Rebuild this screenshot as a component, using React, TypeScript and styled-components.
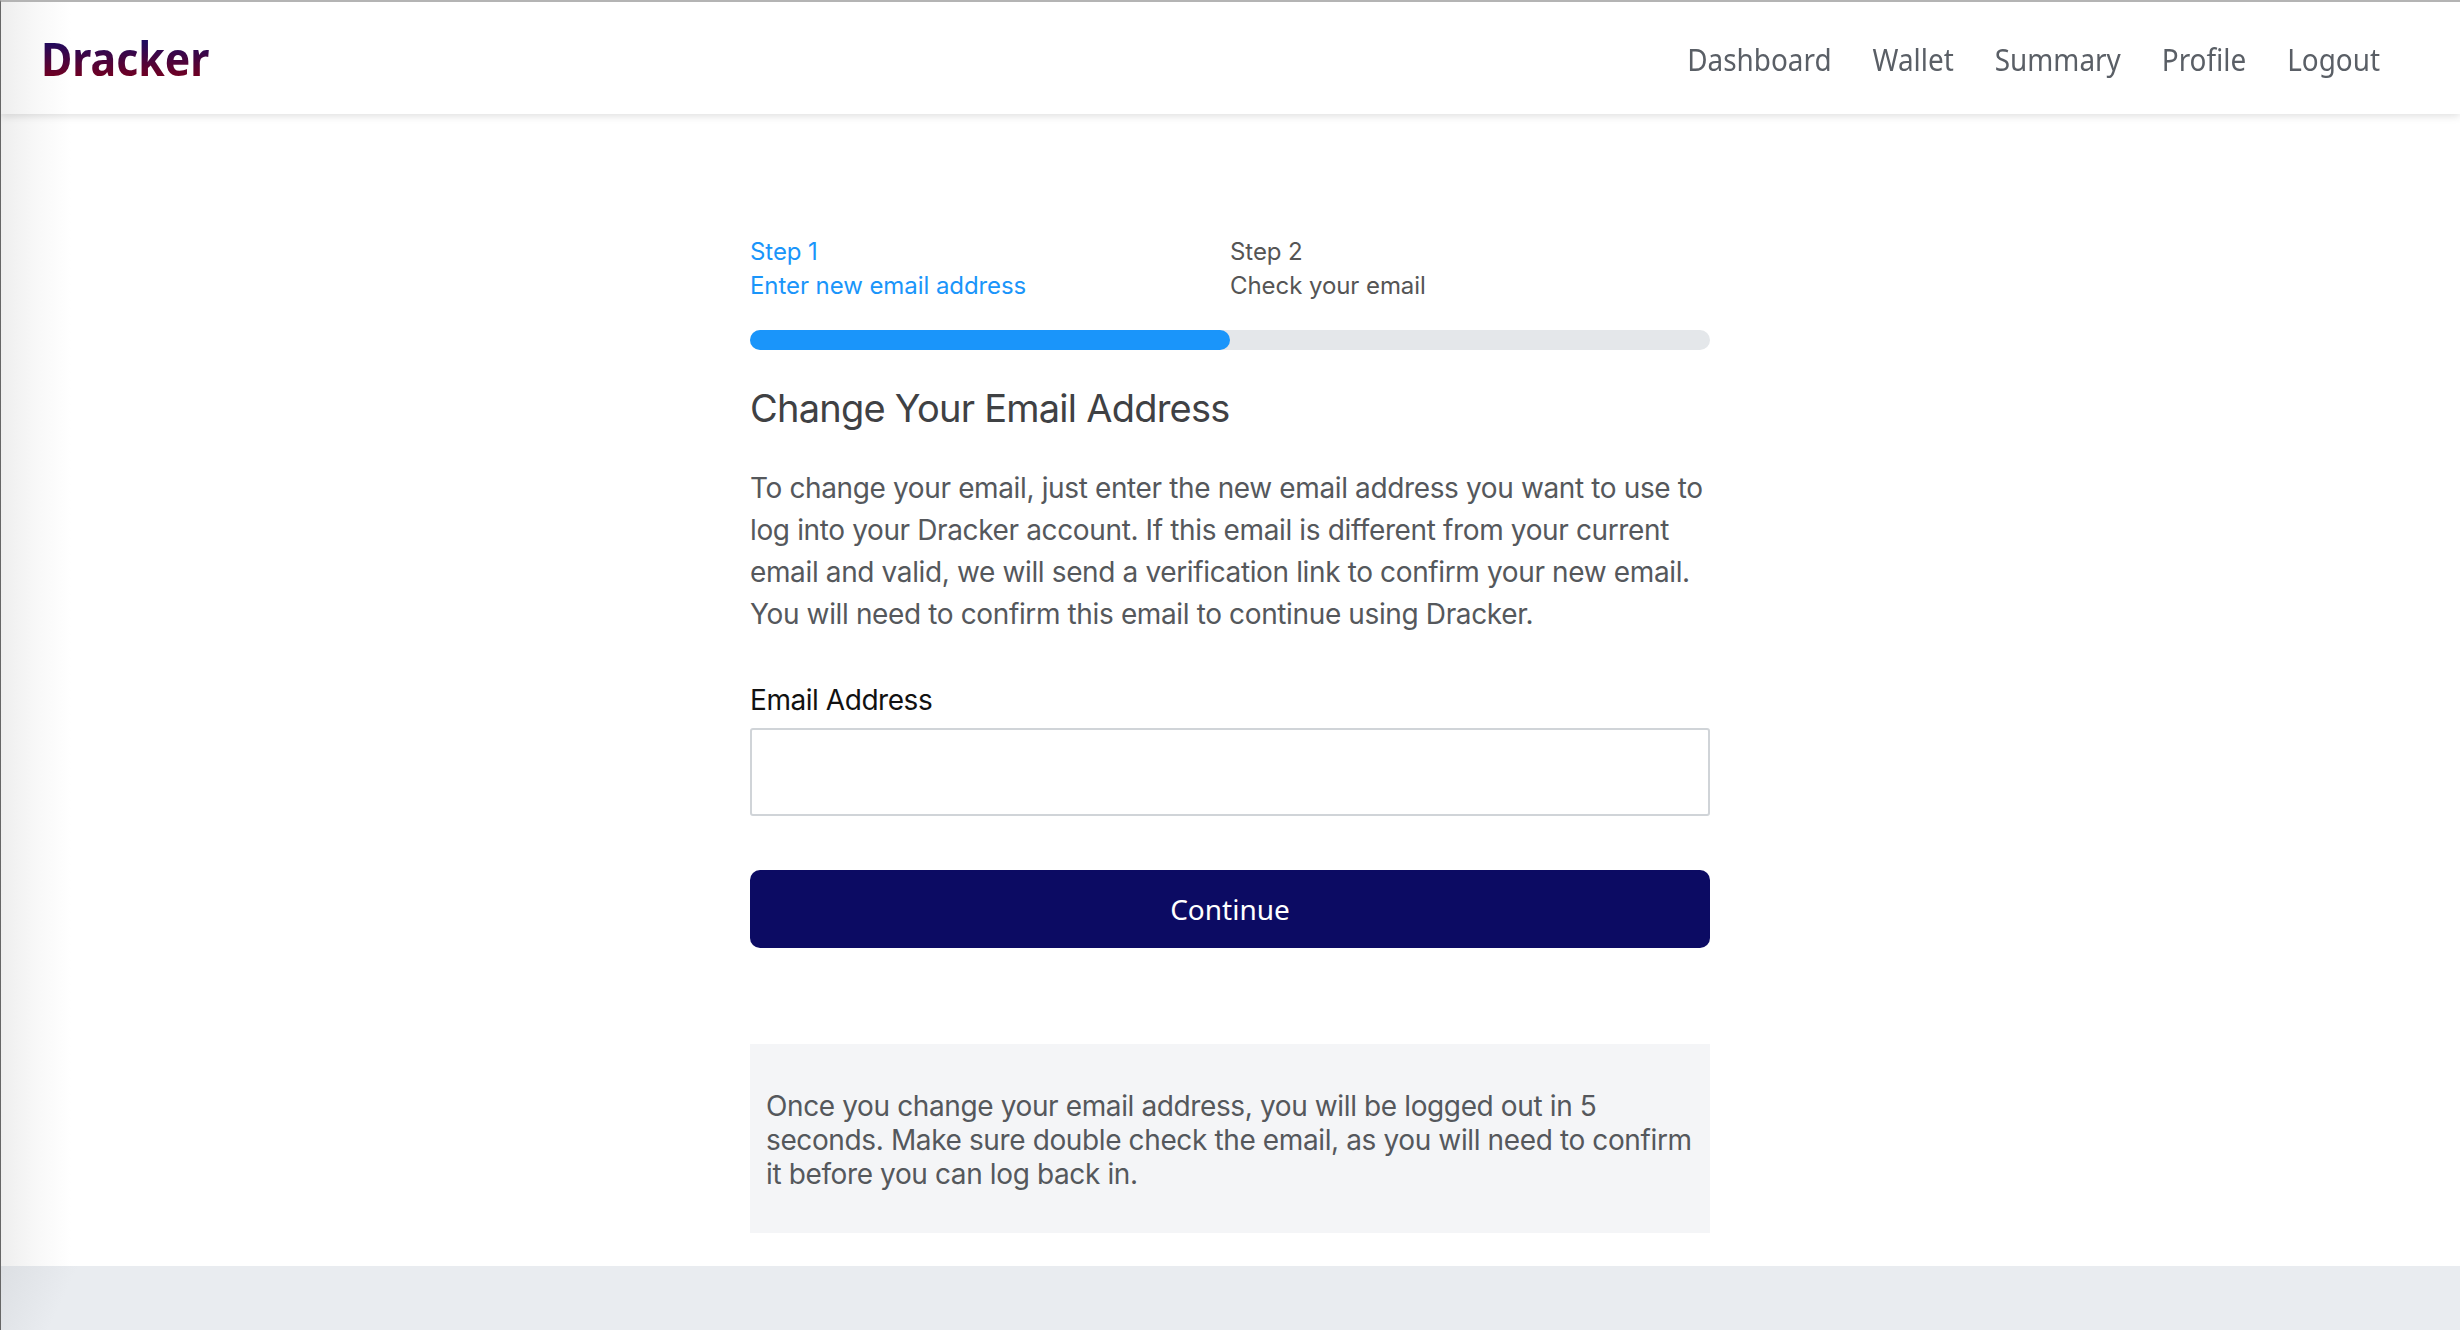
import React from 'react'
import styled, { createGlobalStyle } from 'styled-components'

const GlobalStyle = createGlobalStyle`
  html, body {
    margin: 0;
    padding: 0;
    background: #fff;
  }
  * {
    box-sizing: border-box;
  }
`

const Page = styled.div`
  width: 2460px;
  height: 1330px;
  display: flex;
  flex-direction: column;
  overflow: hidden;
  border-top: 2px solid #b4b4b4;
  border-left: 1px solid #666;
  background: linear-gradient(90deg, #eeeeee 0, #f8f8f8 35px, #fff 70px);
`
const Header = styled.header`
  height: 112px;
  flex: none;
  display: flex;
  align-items: center;
  justify-content: space-between;
  padding: 0 80px 0 40px;
  background: linear-gradient(90deg, #eeeeee 0, #f8f8f8 35px, #fff 70px);
  box-shadow: 0 2px 8px rgba(0, 0, 0, 0.13);
`
const Logo = styled.div`
  font-family: 'Noto Sans', sans-serif;
  font-size: 47px;
  font-weight: 700;
  line-height: 1;
  background: linear-gradient(180deg, #1f0a5e 15%, #6d0024 85%);
  -webkit-background-clip: text;
  background-clip: text;
  color: transparent;
  transform: scaleX(0.91);
  transform-origin: left center;
`
const Nav = styled.nav`
  display: flex;
  gap: 44px;
  padding-top: 2px;
  transform: scaleX(0.93);
  transform-origin: right center;
`
const NavLink = styled.a`
  font-family: 'Noto Sans', sans-serif;
  font-size: 30px;
  color: #5a5f66;
`
const Main = styled.main`
  flex: 1;
  display: flex;
  flex-direction: column;
  width: 960px;
  margin-left: 749px;
  padding-top: 121px;
  font-family: Inter, sans-serif;
`
const Steps = styled.div`
  display: grid;
  grid-template-columns: 1fr 1fr;
`
const Step = styled.div<{ $active?: boolean }>`
  font-size: 24px;
  line-height: 34px;
  letter-spacing: -0.07px;
  color: ${p => (p.$active ? '#1a95fa' : '#555')};
`
const Track = styled.div`
  height: 20px;
  margin-top: 27px;
  border-radius: 10px;
  background: #e4e7ea;
`
const Fill = styled.div`
  height: 100%;
  border-radius: 10px;
  background: #1a95fa;
`
const Title = styled.h1`
  margin: 32px 0 0;
  font-size: 38px;
  line-height: 52px;
  font-weight: 400;
  letter-spacing: -0.76px;
  color: #3f4144;
`
const Intro = styled.p`
  margin: 33px 0 0;
  font-size: 28px;
  line-height: 42px;
  letter-spacing: -0.37px;
  color: #55585c;
`
const Label = styled.label`
  display: block;
  margin-top: 44px;
  font-size: 28px;
  line-height: 42px;
  letter-spacing: -0.45px;
  color: #111;
`
const Input = styled.input`
  display: block;
  width: 100%;
  height: 88px;
  margin-top: 7px;
  border: 2px solid #d0d4d8;
  border-radius: 3px;
  background: #fff;
`
const Button = styled.button`
  height: 78px;
  margin-top: 54px;
  border: 0;
  border-radius: 10px;
  background: #0c0b63;
  color: #fff;
  font-family: 'Noto Sans', sans-serif;
  font-size: 28px;
`
const Note = styled.div`
  height: 189px;
  margin-top: 96px;
  padding: 45px 16px 0;
  background: #f4f5f7;
  font-size: 28px;
  line-height: 34px;
  letter-spacing: -0.38px;
  color: #55585c;
`
const Footer = styled.footer`
  height: 64px;
  flex: none;
  background: linear-gradient(115deg, #dcdfe3 0, #e9ecf0 70px);
`

const navItems = ['Dashboard', 'Wallet', 'Summary', 'Profile', 'Logout']

export default function App() {
  return (
    <Page>
      <GlobalStyle />
      <Header>
        <Logo>Dracker</Logo>
        <Nav>
          {navItems.map(item => (
            <NavLink key={item}>{item}</NavLink>
          ))}
        </Nav>
      </Header>
      <Main>
        <Steps>
          <Step $active>
            Step 1
            <br />
            Enter new email address
          </Step>
          <Step>
            Step 2
            <br />
            Check your email
          </Step>
        </Steps>
        <Track>
          <Fill style={{ width: '50%' }} />
        </Track>
        <Title>Change Your Email Address</Title>
        <Intro>
          To change your email, just enter the new email address you want to use to
          log into your Dracker account. If this email is different from your current
          email and valid, we will send a verification link to confirm your new email.
          You will need to confirm this email to continue using Dracker.
        </Intro>
        <Label htmlFor="email">Email Address</Label>
        <Input id="email" type="email" />
        <Button>Continue</Button>
        <Note>
          Once you change your email address, you will be logged out in 5 seconds. Make
          sure double check the email, as you will need to confirm it before you can log
          back in.
        </Note>
      </Main>
      <Footer />
    </Page>
  )
}
